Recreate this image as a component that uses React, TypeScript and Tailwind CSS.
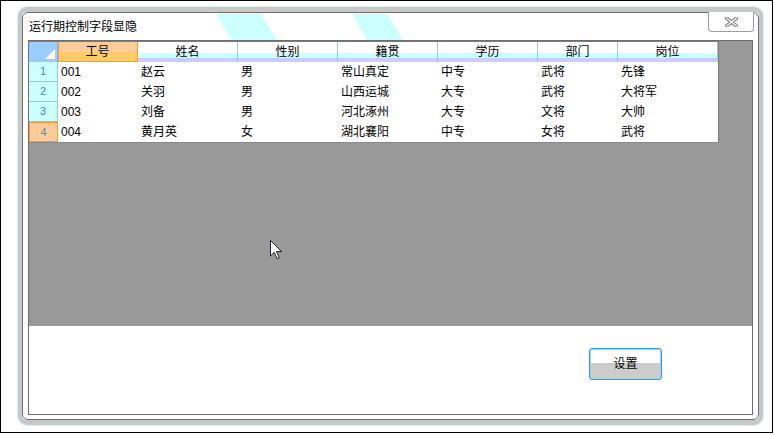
import React from 'react';

const columns = [
  { key: 'id', title: '工号', width: 'w-[80px]' },
  { key: 'name', title: '姓名', width: 'w-[100px]' },
  { key: 'sex', title: '性别', width: 'w-[100px]' },
  { key: 'home', title: '籍贯', width: 'w-[100px]' },
  { key: 'edu', title: '学历', width: 'w-[100px]' },
  { key: 'dept', title: '部门', width: 'w-[80px]' },
  { key: 'post', title: '岗位', width: 'w-[100px]' },
];

const rows = [
  ['001', '赵云', '男', '常山真定', '中专', '武将', '先锋'],
  ['002', '关羽', '男', '山西运城', '大专', '武将', '大将军'],
  ['003', '刘备', '男', '河北涿州', '大专', '文将', '大帅'],
  ['004', '黄月英', '女', '湖北襄阳', '中专', '女将', '武将'],
];

// current cell: row 4, column 工号
const currentRow = 3;
const currentCol = 0;

function CloseGlyph() {
  return (
    <svg width="13" height="10" viewBox="0 0 13 10">
      <path d="M1.5 1 L11.5 9 M11.5 1 L1.5 9" stroke="#7a7a7a" strokeWidth="3.4" strokeLinecap="square" />
      <path d="M1.5 1 L11.5 9 M11.5 1 L1.5 9" stroke="#ffffff" strokeWidth="1.3" strokeLinecap="square" />
    </svg>
  );
}

function Cursor() {
  return (
    <svg
      className="absolute left-[270px] top-[240px]"
      width="13"
      height="20"
      viewBox="0 0 13 20"
    >
      <path
        d="M0.5 0.5 L0.5 16 L4.2 12.4 L7 18.6 L9.2 17.6 L6.5 11.6 L11.5 11.6 Z"
        fill="#ffffff"
        stroke="#1c1c30"
        strokeWidth="1"
      />
    </svg>
  );
}

function Grid() {
  return (
    <div className="flex flex-col w-[690px] border-t border-r border-b border-t-[#7d7d7d] border-r-[#7d7d7d] border-b-[#8a8a8a] bg-white">
      {/* header */}
      <div className="flex h-[20px]">
        <div className="relative w-[29px] h-[20px] bg-[#99ccff] border-r border-[#7fb4e6]">
          <svg className="absolute right-[2px] bottom-[3px]" width="10" height="10" viewBox="0 0 10 10">
            <path d="M10 0 L10 10 L0 10 Z" fill="#ffffff" />
          </svg>
        </div>
        {columns.map((c, i) => (
          <div
            key={c.key}
            className={
              i === currentCol
                ? `${c.width} h-[20px] flex items-center justify-center border-r border-[#ff9933] bg-[linear-gradient(to_bottom,#ffcc99_0%,#ffcc99_50%,#ffcc66_50%,#ffcc66_100%)] shadow-[inset_1px_0_0_#ff9933,inset_0_-1px_0_#ff9933] text-[12px] text-black`
                : `${c.width} h-[20px] flex items-center justify-center border-r border-[#99cccc] bg-[linear-gradient(to_bottom,#ffffff_0%,#ffffff_55%,#ccffff_55%,#ccffff_80%,#ccccff_80%,#ccccff_100%)] text-[12px] text-black`
            }
          >
            {c.title}
          </div>
        ))}
      </div>
      {/* rows */}
      {rows.map((r, ri) => (
        <div key={ri} className="flex h-[20px]">
          <div
            className={
              ri === currentRow
                ? 'w-[29px] h-[20px] flex items-center justify-center bg-[#ffcc99] shadow-[inset_0_0_0_1px_#ff9933] text-[11px] text-[#4a90b8]'
                : 'w-[29px] h-[20px] flex items-center justify-center bg-[#ccffff] border-r border-b border-[#99cccc] text-[11px] text-[#3d8fc4]'
            }
          >
            {ri + 1}
          </div>
          {r.map((v, ci) => (
            <div
              key={ci}
              className={`${columns[ci].width} h-[20px] flex items-center pl-[3px] text-[12px] text-black`}
            >
              {v}
            </div>
          ))}
        </div>
      ))}
    </div>
  );
}

export default function App() {
  return (
    <div className="relative w-[775px] h-[435px] bg-white font-['Liberation_Sans','Noto_Sans_CJK_SC',sans-serif]">
      <div className="w-[773px] h-[433px] border border-black pl-[17px] pt-[6px]">
        {/* window */}
        <div className="w-[745px] h-[418px] rounded-[9px] border-x-4 border-t-[5px] border-b-[5px] border-[#c8c8c8] shadow-[0_0_0_1px_#d6f1fa]">
          <div className="h-full rounded-[6px] border border-[#6f6f6f] bg-white flex flex-col">
            {/* title bar */}
            <div className="relative h-[27px] flex items-start justify-between">
              <svg className="absolute left-0 top-0" width="732" height="27" viewBox="0 0 732 27">
                <polygon points="193,1 238,1 254,27 209,27" fill="#ccffff" />
                <polygon points="329,1 364,1 380,27 344,27" fill="#ccffff" />
              </svg>
              <span className="relative pl-[6px] pt-[7px] text-[12px] leading-[14px] text-black">
                运行期控制字段显隐
              </span>
              <button className="relative mt-[-1px] mr-[4px] w-[46px] h-[20px] flex items-center justify-center bg-white border-x border-b border-[#9d9d9d] rounded-b-[4px]">
                <CloseGlyph />
              </button>
            </div>
            {/* content panel */}
            <div className="ml-[5px] w-[725px] h-[375px] border border-[#6e6e6e] flex flex-col">
              <div className="h-[285px] bg-[#999999]">
                <Grid />
              </div>
              <div className="flex-1 bg-white flex justify-end items-start pt-[22px] pr-[90px]">
                <button className="w-[73px] h-[32px] rounded-[3px] border border-[#3298d6] shadow-[inset_0_0_0_1px_#9fd6f3] bg-[linear-gradient(to_bottom,#ffffff_0%,#ffffff_47%,#cccccc_47%,#cccccc_100%)] text-[12px] text-black">
                  设置
                </button>
              </div>
            </div>
          </div>
        </div>
      </div>
      <Cursor />
    </div>
  );
}
